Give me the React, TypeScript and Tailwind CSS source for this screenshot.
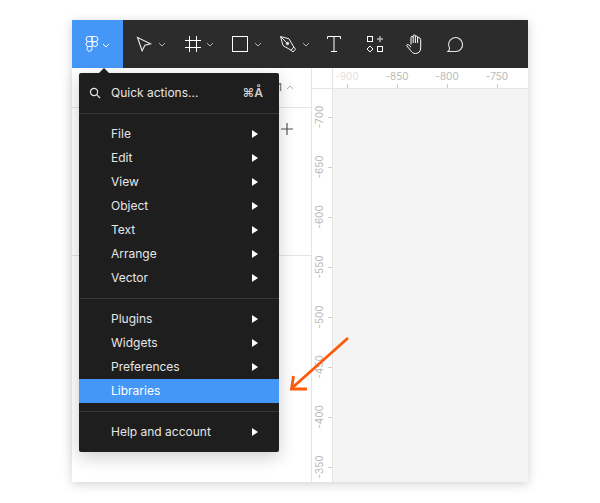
const Chevron = ({ className = "text-[#b3b3b3]" }: { className?: string }) => (
  <svg width="8" height="5" viewBox="0 0 8 5" fill="none" className={className}>
    <path d="M1 1l3 3 3-3" stroke="currentColor" strokeWidth="1" />
  </svg>
);

const Tool = ({ children, chevron = false, w }: { children: React.ReactNode; chevron?: boolean; w: string }) => (
  <div className={`flex items-center shrink-0 ${w}`}>
    <div className="w-6 h-6 flex items-center justify-center">{children}</div>
    {chevron && <div className="ml-[2px] mt-[1px] flex"><Chevron /></div>}
  </div>
);

const Toolbar = () => (
  <div className="h-12 bg-[#2c2c2c] flex items-center shrink-0">
    <div className="w-[51px] h-12 bg-[#4597f7] flex items-center pl-[10px]">
      <svg width="20" height="20" viewBox="0 0 20 20" fill="none" stroke="#fff" strokeWidth="1">
        <path d="M10 2.5H6.5a2.5 2.5 0 0 0 0 5H10zM10 2.5h3.5a2.5 2.5 0 0 1 0 5H10zM10 7.5H6.5a2.5 2.5 0 0 0 0 5H10zM15.5 10a2.5 2.5 0 1 1-5 0 2.5 2.5 0 0 1 5 0zM10 12.5H6.5a2.5 2.5 0 1 0 3.5 2.4z" />
      </svg>
      <div className="mt-[3px] flex"><Chevron className="text-white" /></div>
    </div>
    <div className="w-[9px]" />
    <Tool chevron w="w-[48px]">
      <svg width="18" height="18" viewBox="0 0 18 18" fill="none" stroke="#e6e6e6" strokeWidth="1.1">
        <path d="M2.5 2.5l13 6.3-5.6 1.4-2.8 5.6z" />
      </svg>
    </Tool>
    <Tool chevron w="w-[48px]">
      <svg className="ml-[2px]" width="18" height="18" viewBox="0 0 18 18" fill="none" stroke="#fff" strokeWidth="1">
        <path d="M1 5.5h16M1 12.5h16M5.5 1v16M12.5 1v16" />
      </svg>
    </Tool>
    <Tool chevron w="w-[48px]">
      <svg width="18" height="18" viewBox="0 0 18 18" fill="none" stroke="#fff" strokeWidth="1">
        <rect x="1.5" y="1.5" width="15" height="15" />
      </svg>
    </Tool>
    <Tool chevron w="w-[46px]">
      <svg width="20" height="20" viewBox="0 0 20 20" fill="none" stroke="#f0f0f0" strokeWidth="1">
        <path d="M2.5 2.5l8.5 2.3 4.8 8.2-2.8 3.2-8-4.7z" />
        <path d="M13 16.2l2 1.8 2.5-2.8-1.7-2.2" />
        <circle cx="9.5" cy="9.5" r="1.2" fill="#f0f0f0" />
        <path d="M3 3l5.8 5.8" />
      </svg>
    </Tool>
    <Tool w="w-[41px]">
      <svg width="16" height="18" viewBox="0 0 16 18" fill="none" stroke="#fff" strokeWidth="1">
        <path d="M1.5 4V1.5h13V4M8 1.5v15M5 16.5h6" />
      </svg>
    </Tool>
    <Tool w="w-[40px]">
      <svg width="18" height="18" viewBox="0 0 18 18" fill="none" stroke="#fff" strokeWidth="1">
        <rect x="1.5" y="1.5" width="5" height="5" />
        <rect x="11.5" y="11.5" width="5" height="5" />
        <path d="M4 11l3 3-3 3-3-3z" />
        <path d="M14 1v6M11 4h6" stroke="#b3b3b3" strokeWidth="1.4" />
      </svg>
    </Tool>
    <Tool w="w-[40px]">
      <svg width="20" height="22" viewBox="0 0 20 22" fill="none" stroke="#fff" strokeWidth="1">
        <path d="M6 11.5V4.5a1.1 1.1 0 0 1 2.2 0V3a1.1 1.1 0 0 1 2.2 0v1.2a1.1 1.1 0 0 1 2.2 0v1.3a1.1 1.1 0 0 1 2.2 0 1 1 0 0 1 .9 1V15c0 3.5-2.2 5.5-5.2 5.5-2.6 0-3.6-1.2-5-3.2L1.9 13c-.7-1 .8-2.2 1.7-1.3L6 14.2" />
        <path d="M8.2 4.5V10M10.4 4.2V10M12.6 4.2V10" />
      </svg>
    </Tool>
    <Tool w="w-[40px]">
      <svg className="-ml-[1px]" width="20" height="20" viewBox="0 0 20 20" fill="none" stroke="#e6e6e6" strokeWidth="1.1">
        <path d="M3 17.5h7.5a7 7 0 1 0-6-3.5c.3.8-.5 2.5-1.5 3.5z" />
      </svg>
    </Tool>
  </div>
);

const MenuItem = ({ label, arrow = true, active = false }: { label: string; arrow?: boolean; active?: boolean }) => (
  <div className={`h-6 pl-8 pr-[21px] flex items-center justify-between text-[12px] ${active ? "bg-[#4597f7] text-white" : "text-[#e6e6e6]"}`}>
    <span>{label}</span>
    {arrow && (
      <svg width="6" height="8" viewBox="0 0 6 8"><path d="M0 0l6 4-6 4z" fill="#fff" /></svg>
    )}
  </div>
);

const Separator = () => <div className="h-px bg-[#383838]" />;

const Menu = () => (
  <div className="absolute left-[7px] top-[53px] w-[200px] bg-[#1e1e1e] rounded-[2px] shadow-[0_5px_17px_rgba(0,0,0,0.2)]">
    <div className="absolute -top-[5px] left-[20px] w-0 h-0 border-x-[5px] border-x-transparent border-b-[5px] border-b-[#1e1e1e]" />
    <div className="h-10 pl-[10px] pr-4 flex items-center text-[12px] text-[#e6e6e6]">
      <svg width="12" height="12" viewBox="0 0 12 12" fill="none" stroke="#e6e6e6" strokeWidth="1.2">
        <circle cx="5" cy="5" r="3.6" />
        <path d="M7.7 7.7L11 11" />
      </svg>
      <span className="ml-[10px]">Quick actions...</span>
      <span className="ml-auto font-semibold text-[#cfcfcf]">⌘Å</span>
    </div>
    <Separator />
    <div className="py-2">
      {["File", "Edit", "View", "Object", "Text", "Arrange", "Vector"].map((l) => (
        <MenuItem key={l} label={l} />
      ))}
    </div>
    <Separator />
    <div className="py-2">
      {["Plugins", "Widgets", "Preferences"].map((l) => (
        <MenuItem key={l} label={l} />
      ))}
      <MenuItem label="Libraries" arrow={false} active />
    </div>
    <Separator />
    <div className="py-2">
      <MenuItem label="Help and account" />
    </div>
  </div>
);

const LeftPanel = () => (
  <div className="w-[239px] shrink-0 bg-white flex flex-col text-[#333]">
    <div className="h-10 border-b border-[#e5e5e5] flex items-center justify-end pr-[17px] gap-[4px]">
      <span className="text-[11px] text-[#666]">1</span>
      <svg width="8" height="5" viewBox="0 0 8 5" fill="none" stroke="#b3b3b3"><path d="M1 4l3-3 3 3" /></svg>
    </div>
    <div className="h-[148px] border-b border-[#e5e5e5] flex justify-end pr-[18px] pt-[15px]">
      <svg width="12" height="12" viewBox="0 0 12 12" fill="none" stroke="#555" strokeWidth="1.2"><path d="M6 0v12M0 6h12" /></svg>
    </div>
  </div>
);

const HRuler = () => (
  <div className="h-[21px] flex border-b border-[#e5e5e5] shrink-0">
    <div className="w-[21px] shrink-0 border-r border-[#e5e5e5]" />
    <div className="flex -ml-[11px]">
      {["-900", "-850", "-800", "-750"].map((l, i) => (
        <div key={l} className="w-[50px] flex flex-col items-center justify-between shrink-0 text-[10px] leading-[14px] pt-[1px]">
          <span className={i === 0 ? "text-[#e2e2e2]" : "text-[#b8b8b8]"}>{l}</span>
          <div className="w-px h-[4px] bg-[#cccccc]" />
        </div>
      ))}
    </div>
  </div>
);

const VRuler = () => (
  <div className="w-[21px] shrink-0 border-r border-[#e5e5e5] pt-[3px] flex flex-col">
    {["-700", "-650", "-600", "-550", "-500", "-450", "-400", "-350"].map((l) => (
      <div key={l} className="h-[50px] relative flex items-center justify-end shrink-0">
        <span className="absolute left-[-5px] w-[24px] text-center text-[10px] leading-[14px] text-[#b8b8b8] -rotate-90">{l}</span>
        <div className="w-[4px] h-px bg-[#cccccc]" />
      </div>
    ))}
  </div>
);

const Canvas = () => (
  <div className="flex-1 flex flex-col border-l border-[#e5e5e5] overflow-hidden">
    <HRuler />
    <div className="flex-1 flex min-h-0 overflow-hidden">
      <VRuler />
      <div className="flex-1 bg-[#f4f4f4]" />
    </div>
  </div>
);

export default function App() {
  return (
    <div className="w-[600px] h-[503px] bg-white pt-5 px-[72px] overflow-hidden font-['Inter',sans-serif]">
      <div className="relative w-[456px] h-[462px] bg-white flex flex-col shadow-[0_2px_10px_rgba(0,0,0,0.18)]">
        <Toolbar />
        <div className="flex-1 flex min-h-0">
          <LeftPanel />
          <Canvas />
        </div>
        <Menu />
        <svg className="absolute left-[210px] top-[310px]" width="70" height="66" viewBox="0 0 70 66" fill="none" stroke="#ff5a0a" strokeWidth="2.8">
          <path d="M66 8L10 58" />
          <path d="M11.5 46L9.5 59H25" />
        </svg>
      </div>
    </div>
  );
}
